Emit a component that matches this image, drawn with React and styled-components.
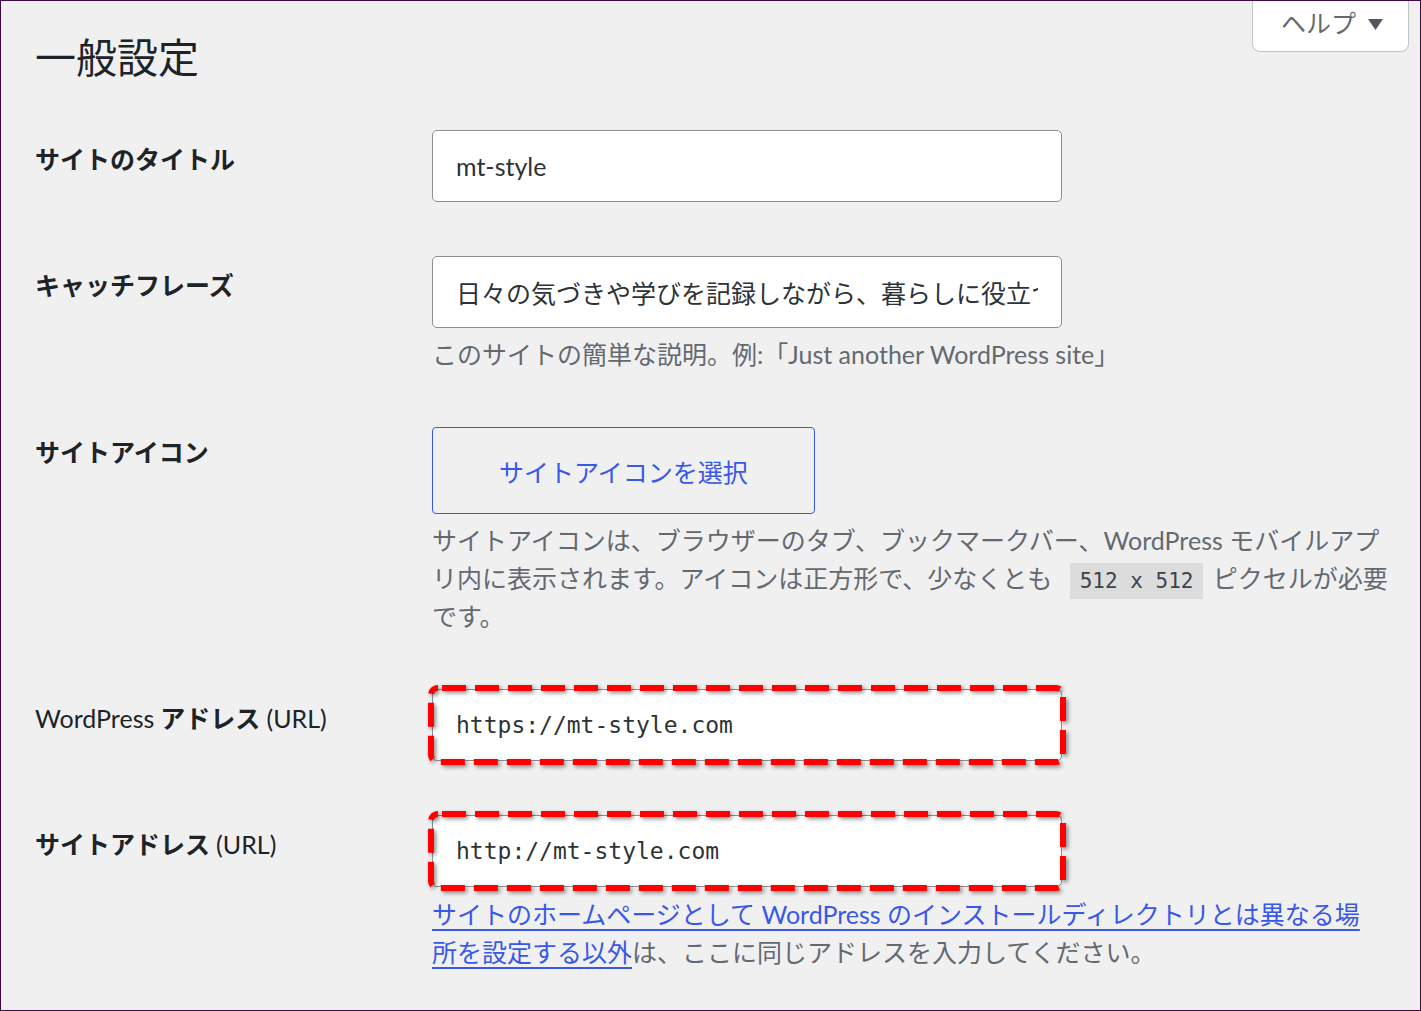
import styled, { createGlobalStyle } from 'styled-components';

const GlobalStyle = createGlobalStyle`
  html, body {
    margin: 0;
    padding: 0;
    background: #f0f0f1;
  }
  * {
    box-sizing: border-box;
  }
`;

const sans = `"Lato", "Noto Sans CJK JP", sans-serif`;
const mono = `"DejaVu Sans Mono", "Liberation Mono", monospace`;

const Frame = styled.div`
  position: relative;
  width: 1421px;
  height: 1011px;
  overflow: hidden;
  border: 1px solid #3d0a47;
  background: #f0f0f1;
  padding-left: 34px;
  font-family: ${sans};
  color: #1d2327;
`;

const Header = styled.div`
  display: flex;
  justify-content: space-between;
  align-items: flex-start;
  padding-right: 11px;
`;

const Title = styled.h1`
  margin: 30px 0 19px 0;
  font-size: 41px;
  line-height: 53px;
  font-weight: 400;
  color: #1d2327;
`;

const HelpTab = styled.button`
  display: flex;
  align-items: center;
  gap: 12px;
  margin-top: -1px;
  width: 157px;
  height: 52px;
  padding: 0 0 8px 28px;
  background: #fff;
  border: 1px solid #c3c4c7;
  border-top: none;
  border-radius: 0 0 8px 8px;
  font-family: ${sans};
  font-size: 25px;
  color: #646970;
  cursor: pointer;

  svg {
    margin-top: 5px;
  }
`;

const Row = styled.div`
  display: grid;
  grid-template-columns: 397px 1fr;
  padding: 27px 0;
`;

const Label = styled.label`
  padding-top: ${(p) => p.$offset}px;
  font-size: 25px;
  line-height: 38px;
  font-weight: 700;
  color: #1d2327;
`;

const Latin = styled.span`
  font-weight: 400;
`;

const Field = styled.div`
  display: flex;
  flex-direction: column;
  align-items: flex-start;
`;

const InputWrap = styled.div`
  position: relative;
  width: 630px;
  height: 72px;
`;

const TextInput = styled.input`
  display: block;
  width: 630px;
  height: 72px;
  padding: 0 23px;
  background: #fff;
  border: 1px solid #8c8f94;
  border-radius: 5px;
  font-family: ${(p) => (p.$mono ? mono : sans)};
  font-size: ${(p) => (p.$mono ? 23 : 25)}px;
  color: #2c3338;
  outline: none;
`;

const Marker = styled.svg`
  position: absolute;
  left: -4px;
  top: -4px;
  width: 638px;
  height: 80px;
  overflow: visible;
  pointer-events: none;
  filter: drop-shadow(2px 2px 2px rgba(0, 0, 0, 0.45));
`;

const IconButton = styled.button`
  display: block;
  width: 383px;
  height: 87px;
  background: transparent;
  border: 1px solid #3858e9;
  border-radius: 4px;
  font-family: ${sans};
  font-size: 25px;
  color: #3858e9;
  cursor: pointer;
`;

const Description = styled.p`
  margin: ${(p) => p.$gap}px 0 0 0;
  font-size: 25px;
  line-height: 38px;
  color: #646970;
  white-space: nowrap;
`;

const Code = styled.code`
  margin: 0 3px 0 11px;
  padding: 6px 10px;
  background: #dcdcdd;
  font-family: ${mono};
  font-size: 21px;
  line-height: 1;
  color: #3c434a;
`;

const Link = styled.a`
  color: #3858e9;
  text-decoration: underline;
  text-decoration-thickness: 2px;
  text-underline-offset: 5px;
`;

function DashedMark() {
    return (
        <Marker>
            <rect
                x="3"
                y="3"
                width="632"
                height="74"
                rx="7"
                fill="none"
                stroke="#ff0000"
                strokeWidth="6"
                strokeDasharray="24 9"
                strokeDashoffset="-4"
            />
        </Marker>
    );
}

function App() {
    return (
        <Frame>
            <GlobalStyle />
            <Header>
                <Title>一般設定</Title>
                <HelpTab>
                    ヘルプ
                    <svg width="15" height="11" viewBox="0 0 15 11">
                        <polygon points="0,0 15,0 7.5,11" fill="#50575e" />
                    </svg>
                </HelpTab>
            </Header>

            <Row>
                <Label $offset={10}>サイトのタイトル</Label>
                <Field>
                    <TextInput readOnly value="mt-style" />
                </Field>
            </Row>

            <Row>
                <Label $offset={10}>キャッチフレーズ</Label>
                <Field>
                    <TextInput readOnly value="日々の気づきや学びを記録しながら、暮らしに役立つ情報をお届けします" />
                    <Description $gap={7}>このサイトの簡単な説明。例:「Just another WordPress site」</Description>
                </Field>
            </Row>

            <Row>
                <Label $offset={6}>サイトアイコン</Label>
                <Field>
                    <IconButton>サイトアイコンを選択</IconButton>
                    <Description $gap={7}>
                        サイトアイコンは、ブラウザーのタブ、ブックマークバー、WordPress モバイルアプ<br />
                        リ内に表示されます。アイコンは正方形で、少なくとも <Code>512 x 512</Code> ピクセルが必要<br />
                        です。
                    </Description>
                </Field>
            </Row>

            <Row>
                <Label $offset={10}>
                    <Latin>WordPress</Latin> アドレス <Latin>(URL)</Latin>
                </Label>
                <Field>
                    <InputWrap>
                        <TextInput $mono readOnly value="https://mt-style.com" />
                        <DashedMark />
                    </InputWrap>
                </Field>
            </Row>

            <Row>
                <Label $offset={10}>
                    サイトアドレス <Latin>(URL)</Latin>
                </Label>
                <Field>
                    <InputWrap>
                        <TextInput $mono readOnly value="http://mt-style.com" />
                        <DashedMark />
                    </InputWrap>
                    <Description $gap={8}>
                        <Link href="#">
                            サイトのホームページとして WordPress のインストールディレクトリとは異なる場<br />
                            所を設定する以外
                        </Link>
                        は、ここに同じアドレスを入力してください。
                    </Description>
                </Field>
            </Row>
        </Frame>
    );
}

export default App;
